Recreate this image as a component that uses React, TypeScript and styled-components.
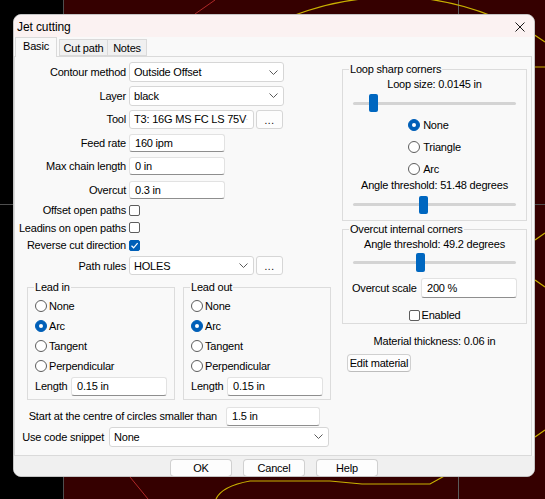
import React from 'react';
import styled, { createGlobalStyle } from 'styled-components';

const GlobalStyle = createGlobalStyle`
  html, body {
    margin: 0;
    padding: 0;
    background: #000;
  }
  body {
    font-family: 'Liberation Sans', Arial, sans-serif;
  }
`;

const Page = styled.div`
  position: relative;
  width: 545px;
  height: 499px;
  overflow: hidden;
  box-sizing: border-box;
  padding: 14px 0 0 13px;
  font-family: 'Liberation Sans', Arial, sans-serif;
  font-size: 11px;
  letter-spacing: -0.2px;
  color: #000;
`;

// the CAD drawing behind the dialog
const Canvas = styled.svg`
  position: absolute;
  left: 0;
  top: 0;
  width: 545px;
  height: 499px;
`;

const Dialog = styled.div`
  position: relative;
  width: 522px;
  height: 463px;
  box-sizing: border-box;
  border: 1px solid #c4c4c4;
  border-radius: 8px;
  background: #f9f9f9;
  overflow: hidden;
  display: flex;
  flex-direction: column;
`;

const TitleBar = styled.div`
  height: 22px;
  flex-shrink: 0;
  background: #fbf2f2;
  display: flex;
  align-items: center;
  justify-content: space-between;
  padding: 1px 9px 0 3px;
  box-sizing: border-box;
  font-size: 12px;
  letter-spacing: -0.1px;
`;

const TabStrip = styled.div`
  position: relative;
  z-index: 1;
  height: 19px;
  flex-shrink: 0;
  display: flex;
  align-items: flex-end;
  padding-left: 1px;
`;

const Tab = styled.div<{ $active?: boolean; $w: number; $ml?: number }>`
  width: ${(p) => p.$w}px;
  height: ${(p) => (p.$active ? 20 : 17)}px;
  margin-left: ${(p) => p.$ml ?? 0}px;
  margin-bottom: ${(p) => (p.$active ? -1 : 0)}px;
  box-sizing: border-box;
  border: 1px solid #dadada;
  border-bottom: ${(p) => (p.$active ? 'none' : '1px solid #dadada')};
  background: ${(p) => (p.$active ? '#f9f9f9' : '#f0f0f0')};
  display: flex;
  align-items: center;
  justify-content: center;
  padding-bottom: ${(p) => (p.$active ? 3 : 0)}px;
`;

const Panel = styled.div`
  flex: 1;
  margin-right: 2px;
  border: 1px solid #dadada;
  display: flex;
`;

const LeftCol = styled.div`
  width: 327px;
  padding-top: 3.5px;
  display: flex;
  flex-direction: column;
`;

const RightCol = styled.div`
  width: 185px;
  padding-top: 5.5px;
  display: flex;
  flex-direction: column;
`;

const FormRow = styled.div<{ $h: number; $labelW?: number; $gap?: number; $mt?: number }>`
  display: grid;
  grid-template-columns: ${(p) => p.$labelW ?? 111}px auto;
  column-gap: ${(p) => p.$gap ?? 3}px;
  align-items: center;
  height: ${(p) => p.$h}px;
  margin-top: ${(p) => p.$mt ?? 0}px;
`;

const Label = styled.span`
  text-align: right;
  white-space: nowrap;
`;

const FieldGroup = styled.div`
  display: flex;
  align-items: center;
  gap: 2px;
`;

const SelectBox = styled.div<{ $w: number; $h?: number }>`
  width: ${(p) => p.$w}px;
  height: ${(p) => p.$h ?? 20}px;
  box-sizing: border-box;
  border: 1px solid #d6d6d6;
  border-radius: 3px;
  background: #fff;
  display: flex;
  align-items: center;
  justify-content: space-between;
  padding: 0 5px 0 4px;
  white-space: nowrap;
  overflow: hidden;
`;

const MoreButton = styled.div<{ $h?: number }>`
  width: 27px;
  height: ${(p) => p.$h ?? 19}px;
  box-sizing: border-box;
  border: 1px solid #d6d6d6;
  border-radius: 3px;
  background: #fdfdfd;
  display: flex;
  align-items: center;
  justify-content: center;
  font-size: 10px;
  letter-spacing: 0.5px;
  padding-top: 2px;
`;

const TextInput = styled.input<{ $w: number; $h?: number }>`
  width: ${(p) => p.$w}px;
  height: ${(p) => p.$h ?? 19}px;
  box-sizing: border-box;
  margin: 0;
  border: 1px solid #e2e2e2;
  border-bottom: 1px solid #8e8e8e;
  border-radius: 3px;
  background: #fff;
  padding: 0 5px;
  font-family: 'Liberation Sans', Arial, sans-serif;
  font-size: 11px;
  letter-spacing: -0.2px;
  color: #000;
  outline: none;
`;

const Box = styled.div<{ $checked?: boolean }>`
  width: 11px;
  height: 11px;
  box-sizing: border-box;
  border: 1px solid ${(p) => (p.$checked ? '#005fb8' : '#5d5d5d')};
  border-radius: 2px;
  background: ${(p) => (p.$checked ? '#005fb8' : '#fff')};
  display: flex;
  align-items: center;
  justify-content: center;
`;

const RadioDot = styled.div<{ $checked?: boolean }>`
  width: 12px;
  height: 12px;
  flex-shrink: 0;
  box-sizing: border-box;
  border-radius: 50%;
  border: 1px solid ${(p) => (p.$checked ? '#005fb8' : '#5d5d5d')};
  background: ${(p) => (p.$checked ? '#005fb8' : '#fff')};
  display: flex;
  align-items: center;
  justify-content: center;
  &::after {
    content: '';
    display: ${(p) => (p.$checked ? 'block' : 'none')};
    width: 4px;
    height: 4px;
    border-radius: 50%;
    background: #fff;
  }
`;

const OptionRow = styled.div<{ $h?: number; $gap?: number }>`
  display: flex;
  align-items: center;
  gap: ${(p) => p.$gap ?? 2}px;
  height: ${(p) => p.$h ?? 20}px;
  white-space: nowrap;
`;

const GroupsRow = styled.div`
  display: flex;
  gap: 8px;
  padding-left: 12px;
  margin-top: 3.5px;
`;

const Group = styled.fieldset<{ $w?: number; $h: number; $mt?: number }>`
  margin: ${(p) => p.$mt ?? 0}px 0 0 0;
  padding: 0 7px;
  border: 1px solid #dcdcdc;
  width: ${(p) => (p.$w ? `${p.$w}px` : 'auto')};
  height: ${(p) => p.$h}px;
  box-sizing: border-box;
  min-width: 0;
`;

const Legend = styled.legend`
  padding: 0 1px;
  margin-left: -1px;
  font-size: 11px;
  line-height: 13px;
`;

const GroupInner = styled.div<{ $pt?: number }>`
  display: flex;
  flex-direction: column;
  padding-top: ${(p) => p.$pt ?? 0}px;
`;

const LengthRow = styled.div`
  display: flex;
  align-items: center;
  height: 20px;
`;

const LengthLabel = styled.span`
  width: 36px;
`;

const Caption = styled.div<{ $mt?: number }>`
  text-align: center;
  line-height: 13px;
  margin-top: ${(p) => p.$mt ?? 0}px;
  white-space: nowrap;
`;

const SliderTrack = styled.div<{ $mt?: number; $h?: number }>`
  position: relative;
  height: ${(p) => p.$h ?? 18}px;
  margin: ${(p) => p.$mt ?? 0}px 3px 0;
  &::before {
    content: '';
    position: absolute;
    left: 0;
    right: 0;
    top: calc(50% - 1.5px);
    height: 3px;
    border-radius: 2px;
    background: #d4d4d4;
  }
`;

const Thumb = styled.div`
  position: absolute;
  top: 0;
  bottom: 0;
  width: 9px;
  border-radius: 2px;
  background: #0067c0;
`;

const RadioStack = styled.div<{ $mt?: number }>`
  align-self: center;
  display: flex;
  flex-direction: column;
  gap: 2px;
  margin-top: ${(p) => p.$mt ?? 0}px;
`;

const ScaleRow = styled.div`
  display: flex;
  align-items: center;
  justify-content: space-between;
  padding: 0 2px;
  margin-top: 6px;
`;

const CenteredOption = styled(OptionRow)`
  align-self: center;
  margin-top: 9px;
  height: 16px;
`;

const PushButton = styled.div<{ $w: number }>`
  width: ${(p) => p.$w}px;
  height: 18px;
  box-sizing: border-box;
  border: 1px solid #d0d0d0;
  border-bottom-color: #bdbdbd;
  border-radius: 4px;
  background: #fdfdfd;
  display: flex;
  align-items: center;
  justify-content: center;
  white-space: nowrap;
`;

const EditButton = styled(PushButton)`
  margin: 6.5px 0 0 5px;
`;

const BottomBar = styled.div`
  height: 20px;
  flex-shrink: 0;
  background: #f0f0f0;
  display: flex;
  justify-content: center;
  gap: 11px;
  padding-top: 3px;
  box-sizing: border-box;
`;

const Chevron = () => (
  <svg width="9" height="5" viewBox="0 0 9 5">
    <polyline points="0.5,0.5 4.5,4.5 8.5,0.5" fill="none" stroke="#5a5a5a" strokeWidth="1" />
  </svg>
);

const CloseIcon = () => (
  <svg width="10" height="10" viewBox="0 0 10 10">
    <path d="M0.5 0.5 L9.5 9.5 M9.5 0.5 L0.5 9.5" stroke="#1a1a1a" strokeWidth="1" />
  </svg>
);

const Check = () => (
  <svg width="9" height="9" viewBox="0 0 9 9">
    <polyline points="1.5,4.8 3.6,6.8 7.6,2.2" fill="none" stroke="#fff" strokeWidth="1.2" />
  </svg>
);

const Select: React.FC<{ w: number; h?: number; value: string }> = ({ w, h, value }) => (
  <SelectBox $w={w} $h={h}>
    <span>{value}</span>
    <Chevron />
  </SelectBox>
);

const Checkbox: React.FC<{ checked?: boolean }> = ({ checked }) => (
  <Box $checked={checked}>{checked && <Check />}</Box>
);

const Slider: React.FC<{ pos: number; mt?: number; h?: number }> = ({ pos, mt, h }) => (
  <SliderTrack $mt={mt} $h={h}>
    <Thumb style={{ left: pos }} />
  </SliderTrack>
);

const leadOptions = ['None', 'Arc', 'Tangent', 'Perpendicular'];

const LeadGroup: React.FC<{ title: string }> = ({ title }) => (
  <Group $w={148} $h={119.5}>
    <Legend>{title}</Legend>
    <GroupInner $pt={2.5}>
      {leadOptions.map((o) => (
        <OptionRow key={o}>
          <RadioDot $checked={o === 'Arc'} />
          {o}
        </OptionRow>
      ))}
      <LengthRow>
        <LengthLabel>Length</LengthLabel>
        <TextInput $w={96} readOnly value="0.15 in" />
      </LengthRow>
    </GroupInner>
  </Group>
);

const Background = () => (
  <Canvas viewBox="0 0 545 499">
    <rect x="0" y="0" width="63" height="499" fill="#000" />
    <rect x="63" y="0" width="482" height="499" fill="#350000" />
    <line x1="63.5" y1="0" x2="63.5" y2="499" stroke="#4e4e4e" />
    <line x1="458.5" y1="0" x2="458.5" y2="499" stroke="#5a5a5a" />
    <line x1="0" y1="204.5" x2="545" y2="204.5" stroke="#4e4e4e" />
    <line x1="215" y1="0" x2="195" y2="14" stroke="#b02828" />
    <line x1="130" y1="477" x2="148" y2="499" stroke="#b02828" />
    <path d="M292 16 Q 330 2 362 -1 M428 -1 Q 462 4 492 16" fill="none" stroke="#c9b100" strokeWidth="1.2" />
    <path d="M533 34 L545 42 M535 67 L545 67 M535 240 L545 233 M535 280 L545 287 M535 437 L545 430" fill="none" stroke="#c9b100" strokeWidth="1.2" />
    <path d="M216 499 Q 222 486 250 481 L 330 481 L 362 484 L 430 484 L 448 474" fill="none" stroke="#c9b100" strokeWidth="1.2" />
  </Canvas>
);

const App: React.FC = () => (
  <Page>
    <GlobalStyle />
    <Background />
    <Dialog>
      <TitleBar>
        <span>Jet cutting</span>
        <CloseIcon />
      </TitleBar>
      <TabStrip>
        <Tab $active $w={42}>Basic</Tab>
        <Tab $w={49} $ml={2}>Cut path</Tab>
        <Tab $w={40} $ml={-1}>Notes</Tab>
      </TabStrip>
      <Panel>
        <LeftCol>
          <FormRow $h={23.5}>
            <Label>Contour method</Label>
            <Select w={155} value="Outside Offset" />
          </FormRow>
          <FormRow $h={23.5}>
            <Label>Layer</Label>
            <Select w={155} value="black" />
          </FormRow>
          <FormRow $h={23.5}>
            <Label>Tool</Label>
            <FieldGroup>
              <Select w={125} h={19} value="T3: 16G MS FC LS 75V" />
              <MoreButton>...</MoreButton>
            </FieldGroup>
          </FormRow>
          <FormRow $h={23.5}>
            <Label>Feed rate</Label>
            <TextInput $w={96} $h={18} readOnly value="160 ipm" />
          </FormRow>
          <FormRow $h={23.5}>
            <Label>Max chain length</Label>
            <TextInput $w={96} $h={18} readOnly value="0 in" />
          </FormRow>
          <FormRow $h={23.5}>
            <Label>Overcut</Label>
            <TextInput $w={96} $h={18} readOnly value="0.3 in" />
          </FormRow>
          <FormRow $h={17.5}>
            <Label>Offset open paths</Label>
            <Checkbox />
          </FormRow>
          <FormRow $h={17.5}>
            <Label>Leadins on open paths</Label>
            <Checkbox />
          </FormRow>
          <FormRow $h={17.5}>
            <Label>Reverse cut direction</Label>
            <Checkbox checked />
          </FormRow>
          <FormRow $h={23}>
            <Label>Path rules</Label>
            <FieldGroup>
              <Select w={125} h={19} value="HOLES" />
              <MoreButton>...</MoreButton>
            </FieldGroup>
          </FormRow>
          <GroupsRow>
            <LeadGroup title="Lead in" />
            <LeadGroup title="Lead out" />
          </GroupsRow>
          <FormRow $h={20} $labelW={202} $gap={9} $mt={6}>
            <Label>Start at the centre of circles smaller than</Label>
            <TextInput $w={94} readOnly value="1.5 in" />
          </FormRow>
          <FormRow $h={21} $labelW={89} $gap={5}>
            <Label>Use code snippet</Label>
            <Select w={220} value="None" />
          </FormRow>
        </LeftCol>
        <RightCol>
          <Group $h={158.5}>
            <Legend>Loop sharp corners</Legend>
            <GroupInner $pt={2}>
              <Caption>Loop size: 0.0145 in</Caption>
              <Slider pos={16} mt={3.5} />
              <RadioStack $mt={3}>
                {['None', 'Triangle', 'Arc'].map((o) => (
                  <OptionRow key={o} $gap={3}>
                    <RadioDot $checked={o === 'None'} />
                    {o}
                  </OptionRow>
                ))}
              </RadioStack>
              <Caption>Angle threshold: 51.48 degrees</Caption>
              <Slider pos={66} mt={3.5} />
            </GroupInner>
          </Group>
          <Group $h={101.5} $mt={1.5}>
            <Legend>Overcut internal corners</Legend>
            <GroupInner $pt={2}>
              <Caption>Angle threshold: 49.2 degrees</Caption>
              <Slider pos={63} mt={2.5} h={19} />
              <ScaleRow>
                <span>Overcut scale</span>
                <TextInput $w={96} $h={20} readOnly value="200 %" />
              </ScaleRow>
              <CenteredOption $gap={2}>
                <Checkbox />
                Enabled
              </CenteredOption>
            </GroupInner>
          </Group>
          <Caption $mt={10.5}>Material thickness: 0.06 in</Caption>
          <EditButton $w={64}>Edit material</EditButton>
        </RightCol>
      </Panel>
      <BottomBar>
        <PushButton $w={62}>OK</PushButton>
        <PushButton $w={62}>Cancel</PushButton>
        <PushButton $w={62}>Help</PushButton>
      </BottomBar>
    </Dialog>
  </Page>
);

export default App;
